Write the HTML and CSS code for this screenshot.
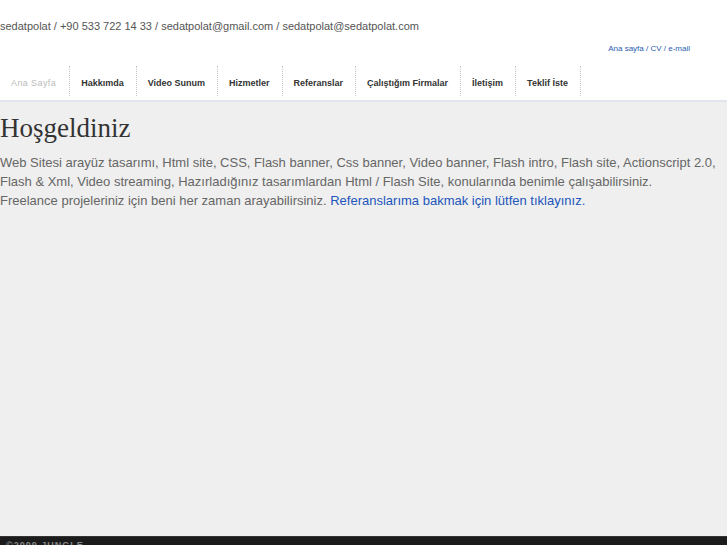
FILE: index.html
```html
<!DOCTYPE html>
<html lang="tr">
<head>
<meta charset="utf-8">
<title>sedatpolat</title>
<link rel="stylesheet" href="styles.css">
</head>
<body>
<div class="header">
  <div class="contact">sedatpolat / +90 533 722 14 33 / sedatpolat@gmail.com / sedatpolat@sedatpolat.com</div>
  <div class="toplinks"><a href="#">Ana sayfa</a> / <a href="#">CV</a> / <a href="#">e-mail</a></div>
  <ul class="nav">
    <li class="active"><a href="#">Ana Sayfa</a></li>
    <li><a href="#">Hakkımda</a></li>
    <li><a href="#">Video Sunum</a></li>
    <li><a href="#">Hizmetler</a></li>
    <li><a href="#">Referanslar</a></li>
    <li><a href="#">Çalıştığım Firmalar</a></li>
    <li><a href="#">İletişim</a></li>
    <li><a href="#">Teklif İste</a></li>
  </ul>
</div>
<div class="main">
  <h1>Hoşgeldiniz</h1>
  <p>Web Sitesi arayüz tasarımı, Html site, CSS, Flash banner, Css banner, Video banner, Flash intro, Flash site, Actionscript 2.0, Flash &amp; Xml, Video streaming, Hazırladığınız tasarımlardan Html / Flash Site, konularında benimle çalışabilirsiniz.<br>Freelance projeleriniz için beni her zaman arayabilirsiniz. <a href="#">Referanslarıma bakmak için lütfen tıklayınız.</a></p>
</div>
<div class="footer">©2009 JUNGLE</div>
</body>
</html>
```
FILE: styles.css
```css
html, body {
  margin: 0;
  padding: 0;
  height: 100%;
}
body {
  font-family: "Liberation Sans", Arial, sans-serif;
  background: #efefef;
  display: flex;
  flex-direction: column;
  overflow: hidden;
}
.header {
  background: #fff;
  border-bottom: 2px solid #e1e4ec;
  flex: none;
}
.contact {
  font-size: 11px;
  color: #555;
  padding-top: 19px;
  line-height: 15px;
}
.toplinks {
  font-size: 8px;
  color: #2a5db0;
  text-align: right;
  padding-right: 37px;
  margin-top: 10px;
  line-height: 10px;
}
.toplinks a {
  color: #2a5db0;
  text-decoration: none;
}
.nav {
  list-style: none;
  margin: 12px 0 0 0;
  padding: 0 0 4px 0;
  display: flex;
}
.nav li {
  border-right: 1px dotted #c8c8c8;
  height: 30px;
  box-sizing: border-box;
  display: flex;
  align-items: center;
  padding: 3px 12px 0 11px;
}
.nav a {
  font-size: 9px;
  font-weight: bold;
  color: #333;
  text-decoration: none;
}
.nav li.active {
  padding-right: 13px;
}
.nav li.active a {
  color: #bbb;
  font-weight: normal;
  letter-spacing: 0.4px;
}
.main {
  flex: 1;
  padding-top: 11px;
}
h1 {
  font-family: "Liberation Serif", "Times New Roman", serif;
  font-weight: normal;
  font-size: 27px;
  color: #333;
  margin: 0;
  line-height: 30px;
}
p {
  font-size: 13px;
  color: #666;
  line-height: 19px;
  margin: 10px 0 0 0;
}
p a {
  color: #2255bb;
  text-decoration: none;
}
.footer {
  background: #1b1b1b;
  border-top: 1px solid #333;
  height: 5px;
  color: #888;
  font-size: 9px;
  font-weight: bold;
  letter-spacing: 1px;
  padding: 3px 0 0 6px;
  line-height: 10px;
  flex: none;
  overflow: hidden;
}
```
